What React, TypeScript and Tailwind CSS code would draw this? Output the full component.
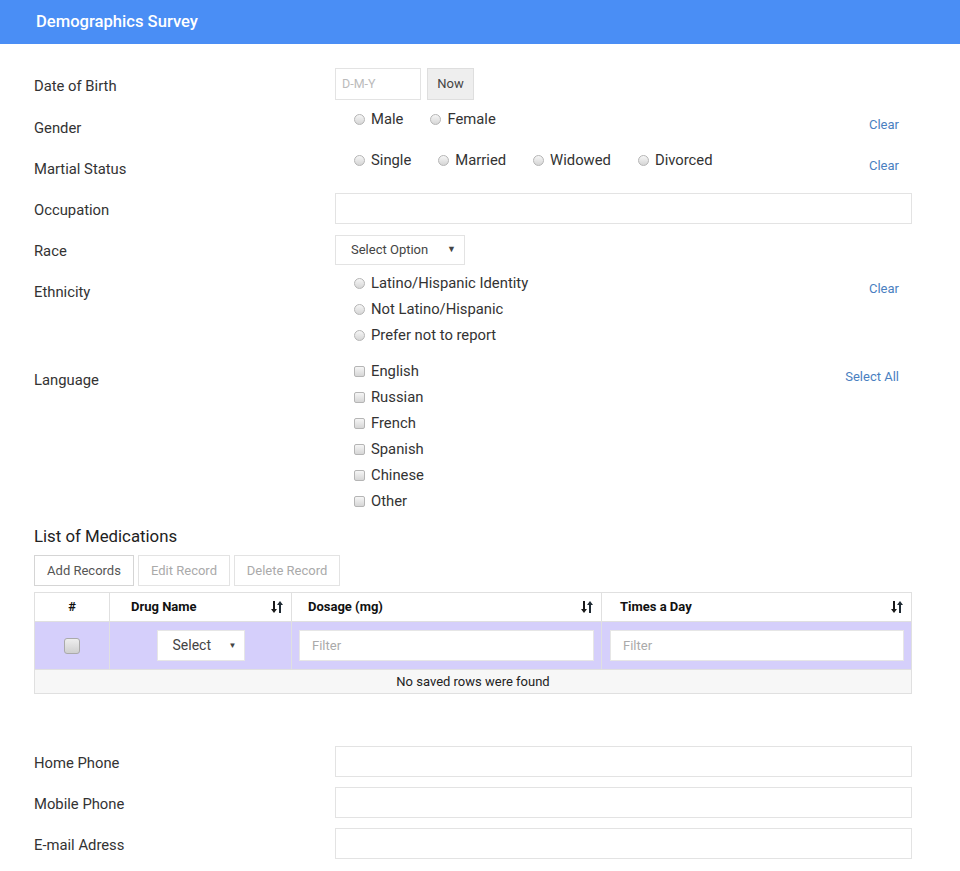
import React from 'react';

// Demographics survey form

const Radio = () => (
  <span className="inline-block w-[11px] h-[11px] rounded-full border border-[#b5b5b5] bg-gradient-to-b from-[#f6f6f6] to-[#d6d6d6] shrink-0" />
);

const Check = () => (
  <span className="inline-block w-[11px] h-[11px] rounded-[2px] border border-[#b5b5b5] bg-gradient-to-b from-[#f6f6f6] to-[#d6d6d6] shrink-0" />
);

const SortIcon = () => (
  <svg width="14" height="14" viewBox="0 0 14 14" className="shrink-0">
    <path d="M4 1v10" stroke="#1a1a1a" strokeWidth="2" />
    <path d="M1 9l3 4 3-4z" fill="#1a1a1a" />
    <path d="M10 13V3" stroke="#1f2a33" strokeWidth="2" />
    <path d="M7 5l3-4 3 4z" fill="#1f2a33" />
  </svg>
);

const Option = ({ label, box = 'radio' }: { label: string; box?: 'radio' | 'check' }) => (
  <label className="flex items-center gap-[6px] h-5 leading-5">
    {box === 'radio' ? <Radio /> : <Check />}
    <span>{label}</span>
  </label>
);

const LinkText = ({ children, pt }: { children: React.ReactNode; pt: string }) => (
  <a className={`text-[13px] leading-5 text-[#4a7fc1] pr-[13px] ${pt}`}>{children}</a>
);

const TextInput = ({ className = '' }: { className?: string }) => (
  <div className={`h-[31px] border border-[#e3e3e3] bg-white ${className}`} />
);

const Row = ({ label, labelPt, children }: { label: string; labelPt: string; children: React.ReactNode }) => (
  <div className="flex items-start">
    <div className={`w-[301px] shrink-0 leading-5 ${labelPt}`}>{label}</div>
    <div className="flex-1">{children}</div>
  </div>
);

export default function App() {
  return (
    <div className="min-h-screen bg-white text-[14.8px] text-[#333]" style={{ fontFamily: 'Roboto, "Liberation Sans", sans-serif' }}>
      <div className="h-[44px] bg-[#4a8ef5] flex items-center px-[36px]">
        <h1 className="text-[16.6px] font-medium text-white">Demographics Survey</h1>
      </div>

      <div className="pl-[34px] pr-[48px] pt-[24px]">
        {/* Date of Birth */}
        <Row label="Date of Birth" labelPt="pt-[8px]">
          <div className="flex gap-[6px]">
            <div className="w-[86px] h-[32px] border border-[#e3e3e3] flex items-center px-[6px] text-[12.5px] text-[#bbb]">D-M-Y</div>
            <button className="w-[47px] h-[32px] bg-[#eeeeee] border border-[#dedede] text-[13px] text-[#444]">Now</button>
          </div>
        </Row>

        {/* Gender */}
        <div className="h-[41px]">
          <Row label="Gender" labelPt="pt-[18px]">
            <div className="flex justify-between">
              <div className="flex gap-[27px] pl-[19px] pt-[9px]">
                <Option label="Male" />
                <Option label="Female" />
              </div>
              <LinkText pt="pt-[15px]">Clear</LinkText>
            </div>
          </Row>
        </div>

        {/* Martial Status */}
        <div className="h-[41px]">
          <Row label="Martial Status" labelPt="pt-[18px]">
            <div className="flex justify-between">
              <div className="flex gap-[27px] pl-[19px] pt-[9px]">
                <Option label="Single" />
                <Option label="Married" />
                <Option label="Widowed" />
                <Option label="Divorced" />
              </div>
              <LinkText pt="pt-[15px]">Clear</LinkText>
            </div>
          </Row>
        </div>

        {/* Occupation */}
        <div className="mt-[11px]">
          <Row label="Occupation" labelPt="pt-[7px]">
            <TextInput />
          </Row>
        </div>

        {/* Race */}
        <div className="mt-[11px]">
          <Row label="Race" labelPt="pt-[6px]">
            <div className="w-[130px] h-[30px] border border-[#e3e3e3] flex items-center justify-between pl-[15px] pr-[8px] text-[13px] text-[#444]">
              <span>Select Option</span>
              <span className="text-[9px]">▼</span>
            </div>
          </Row>
        </div>

        {/* Ethnicity */}
        <Row label="Ethnicity" labelPt="pt-[17px]">
          <div className="flex justify-between">
            <div className="flex flex-col gap-[6px] pl-[19px] pt-[8px]">
              <Option label="Latino/Hispanic Identity" />
              <Option label="Not Latino/Hispanic" />
              <Option label="Prefer not to report" />
            </div>
            <LinkText pt="pt-[14px]">Clear</LinkText>
          </div>
        </Row>

        {/* Language */}
        <Row label="Language" labelPt="pt-[25px]">
          <div className="flex justify-between">
            <div className="flex flex-col gap-[6px] pl-[19px] pt-[16px]">
              {['English', 'Russian', 'French', 'Spanish', 'Chinese', 'Other'].map((l) => (
                <Option key={l} label={l} box="check" />
              ))}
            </div>
            <LinkText pt="pt-[22px]">Select All</LinkText>
          </div>
        </Row>

        {/* Medications */}
        <h2 className="mt-[13px] text-[16.8px] leading-6 text-[#222]">List of Medications</h2>
        <div className="mt-[7px] flex gap-[4px] text-[13px]">
          <button className="h-[31px] w-[100px] border border-[#d5d5d5] text-[#555]">Add Records</button>
          <button className="h-[31px] w-[92px] border border-[#e3e3e3] text-[#aaa]">Edit Record</button>
          <button className="h-[31px] w-[106px] border border-[#e3e3e3] text-[#aaa]">Delete Record</button>
        </div>

        <div className="mt-[6px] border border-[#e0e0e0] text-[13px]">
          <div className="grid grid-cols-[74px_182px_310px_1fr] h-[28px] font-bold text-[#111]">
            <div className="flex items-center justify-center">#</div>
            <div className="flex items-center justify-between pl-[21px] pr-[7px] border-l border-[#e0e0e0]">
              <span>Drug Name</span>
              <SortIcon />
            </div>
            <div className="flex items-center justify-between pl-[16px] pr-[7px] border-l border-[#e0e0e0]">
              <span>Dosage (mg)</span>
              <SortIcon />
            </div>
            <div className="flex items-center justify-between pl-[18px] pr-[7px] border-l border-[#e0e0e0]">
              <span>Times a Day</span>
              <SortIcon />
            </div>
          </div>
          <div className="grid grid-cols-[74px_182px_310px_1fr] h-[48px] bg-[#d5cffb] border-t border-[#e0e0e0]">
            <div className="flex items-center justify-center">
              <span className="w-[16px] h-[16px] rounded-[3px] border border-[#aaa] bg-gradient-to-b from-[#eee] to-[#cfcfcf]" />
            </div>
            <div className="flex items-center justify-center border-l border-[#e0e0e0]">
              <div className="w-[88px] h-[31px] bg-white border border-[#e6e6e6] flex items-center justify-between pl-[15px] pr-[7px] text-[14px] text-[#444]">
                <span>Select</span>
                <span className="text-[8px]">▼</span>
              </div>
            </div>
            <div className="flex items-center px-[7px] border-l border-[#e0e0e0]">
              <div className="w-full h-[31px] bg-white border border-[#e6e6e6] flex items-center px-[12px] text-[#aaa]">Filter</div>
            </div>
            <div className="flex items-center pl-[8px] pr-[7px] border-l border-[#e0e0e0]">
              <div className="w-full h-[31px] bg-white border border-[#e6e6e6] flex items-center px-[12px] text-[#aaa]">Filter</div>
            </div>
          </div>
          <div className="h-[24px] bg-[#f7f7f7] border-t border-[#e0e0e0] flex items-center justify-center text-[#222]">
            No saved rows were found
          </div>
        </div>

        {/* Contact */}
        <div className="mt-[52px] flex flex-col gap-[10px] pb-[12px]">
          <Row label="Home Phone" labelPt="pt-[7px]">
            <TextInput />
          </Row>
          <Row label="Mobile Phone" labelPt="pt-[7px]">
            <TextInput />
          </Row>
          <Row label="E-mail Adress" labelPt="pt-[7px]">
            <TextInput />
          </Row>
        </div>
      </div>
    </div>
  );
}
